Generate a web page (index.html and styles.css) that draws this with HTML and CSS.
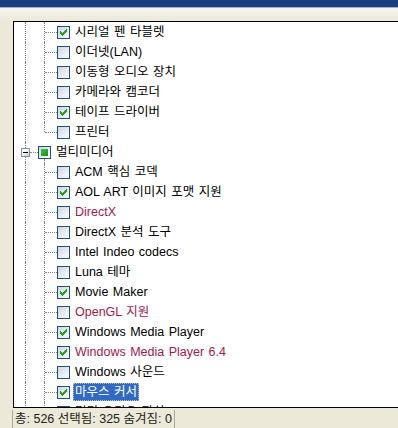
FILE: index.html
```html
<!DOCTYPE html>
<html lang="ko">
<head>
<meta charset="utf-8">
<link rel="stylesheet" href="styles.css">
</head>
<body>
<div class="edge"></div>
<div class="bar"></div>
<div class="tree">
  <div class="row"><span class="g v"></span><span class="g t"></span><span class="cb"><svg class="tick" width="7" height="7" viewBox="0 0 7 7"><path d="M6 0h1v1h-1zM5 1h2v1h-2zM0 2h1v1h-1zM4 2h3v1h-3zM0 3h2v1h-2zM3 3h3v1h-3zM0 4h5v1h-5zM1 5h3v1h-3zM2 6h1v1h-1z"/></svg></span><span class="lbl">시리얼 펜 타블렛</span></div>
  <div class="row"><span class="g v"></span><span class="g t"></span><span class="cb"></span><span class="lbl">이더넷(LAN)</span></div>
  <div class="row"><span class="g v"></span><span class="g t"></span><span class="cb"></span><span class="lbl">이동형 오디오 장치</span></div>
  <div class="row"><span class="g v"></span><span class="g t"></span><span class="cb"></span><span class="lbl">카메라와 캠코더</span></div>
  <div class="row"><span class="g v"></span><span class="g t"></span><span class="cb"><svg class="tick" width="7" height="7" viewBox="0 0 7 7"><path d="M6 0h1v1h-1zM5 1h2v1h-2zM0 2h1v1h-1zM4 2h3v1h-3zM0 3h2v1h-2zM3 3h3v1h-3zM0 4h5v1h-5zM1 5h3v1h-3zM2 6h1v1h-1z"/></svg></span><span class="lbl">테이프 드라이버</span></div>
  <div class="row"><span class="g v"></span><span class="g l"></span><span class="cb"></span><span class="lbl">프린터</span></div>
  <div class="row"><span class="g x"><span class="box"></span></span><span class="cb mix open"></span><span class="lbl">멀티미디어</span></div>
  <div class="row"><span class="g v"></span><span class="g t"></span><span class="cb"></span><span class="lbl">ACM 핵심 코덱</span></div>
  <div class="row"><span class="g v"></span><span class="g t"></span><span class="cb"><svg class="tick" width="7" height="7" viewBox="0 0 7 7"><path d="M6 0h1v1h-1zM5 1h2v1h-2zM0 2h1v1h-1zM4 2h3v1h-3zM0 3h2v1h-2zM3 3h3v1h-3zM0 4h5v1h-5zM1 5h3v1h-3zM2 6h1v1h-1z"/></svg></span><span class="lbl">AOL ART 이미지 포맷 지원</span></div>
  <div class="row"><span class="g v"></span><span class="g t"></span><span class="cb"></span><span class="lbl red">DirectX</span></div>
  <div class="row"><span class="g v"></span><span class="g t"></span><span class="cb"></span><span class="lbl">DirectX 분석 도구</span></div>
  <div class="row"><span class="g v"></span><span class="g t"></span><span class="cb"></span><span class="lbl">Intel Indeo codecs</span></div>
  <div class="row"><span class="g v"></span><span class="g t"></span><span class="cb"></span><span class="lbl">Luna 테마</span></div>
  <div class="row"><span class="g v"></span><span class="g t"></span><span class="cb"><svg class="tick" width="7" height="7" viewBox="0 0 7 7"><path d="M6 0h1v1h-1zM5 1h2v1h-2zM0 2h1v1h-1zM4 2h3v1h-3zM0 3h2v1h-2zM3 3h3v1h-3zM0 4h5v1h-5zM1 5h3v1h-3zM2 6h1v1h-1z"/></svg></span><span class="lbl">Movie Maker</span></div>
  <div class="row"><span class="g v"></span><span class="g t"></span><span class="cb"></span><span class="lbl red">OpenGL 지원</span></div>
  <div class="row"><span class="g v"></span><span class="g t"></span><span class="cb"><svg class="tick" width="7" height="7" viewBox="0 0 7 7"><path d="M6 0h1v1h-1zM5 1h2v1h-2zM0 2h1v1h-1zM4 2h3v1h-3zM0 3h2v1h-2zM3 3h3v1h-3zM0 4h5v1h-5zM1 5h3v1h-3zM2 6h1v1h-1z"/></svg></span><span class="lbl">Windows Media Player</span></div>
  <div class="row"><span class="g v"></span><span class="g t"></span><span class="cb"><svg class="tick" width="7" height="7" viewBox="0 0 7 7"><path d="M6 0h1v1h-1zM5 1h2v1h-2zM0 2h1v1h-1zM4 2h3v1h-3zM0 3h2v1h-2zM3 3h3v1h-3zM0 4h5v1h-5zM1 5h3v1h-3zM2 6h1v1h-1z"/></svg></span><span class="lbl red">Windows Media Player 6.4</span></div>
  <div class="row"><span class="g v"></span><span class="g t"></span><span class="cb"></span><span class="lbl">Windows 사운드</span></div>
  <div class="row"><span class="g v"></span><span class="g t"></span><span class="cb"><svg class="tick" width="7" height="7" viewBox="0 0 7 7"><path d="M6 0h1v1h-1zM5 1h2v1h-2zM0 2h1v1h-1zM4 2h3v1h-3zM0 3h2v1h-2zM3 3h3v1h-3zM0 4h5v1h-5zM1 5h3v1h-3zM2 6h1v1h-1z"/></svg></span><span class="lbl sel">마우스 커서</span></div>
  <div class="row"><span class="g v"></span><span class="g t"></span><span class="cb"></span><span class="lbl">멀티 오디오 장치</span></div>
</div>
<div class="status"><span class="panel">총: 526 선택됨: 325 숨겨짐: 0</span></div>
</body>
</html>
```
FILE: styles.css
```css
* { box-sizing: border-box; }
html, body { margin: 0; padding: 0; }
body {
  width: 398px;
  height: 428px;
  overflow: hidden;
  background: #ece9d8;
  font-family: "Liberation Sans", "Noto Sans CJK KR", sans-serif;
  font-size: 12.5px;
}
.edge {
  height: 8px;
  background: #1d3f7d;
  border-bottom: 1px solid #9fb0cc;
}
.bar {
  height: 13px;
  background: linear-gradient(#f7f5ee, #efece0 60%, #ece9d8);
}
.tree {
  margin-left: 13px;
  width: 400px;
  height: 387px;
  border: 1px solid #000;
  border-right: 0;
  background: #fff;
  overflow: hidden;
  padding-left: 3px;
}
.row {
  display: flex;
  align-items: center;
  height: 20px;
  white-space: nowrap;
}
.g {
  position: relative;
  flex: none;
  width: 19px;
  height: 20px;
}
.g::before {
  content: "";
  position: absolute;
  left: 8px;
  top: 0;
  bottom: 0;
  border-left: 1px dotted #808080;
}
.g.l::before { bottom: 10px; }
.g.t::after, .g.l::after, .g.x::after {
  content: "";
  position: absolute;
  left: 9px;
  right: -2px;
  top: 10px;
  border-top: 1px dotted #808080;
}
.g.x::after { left: 13px; }
.box {
  position: absolute;
  z-index: 1;
  left: 4px;
  top: 6px;
  width: 9px;
  height: 9px;
  border: 1px solid #7b98b2;
  background: linear-gradient(135deg, #ffffff 35%, #c9c6b8);
}
.box::after {
  content: "";
  position: absolute;
  left: 1px;
  top: 3px;
  width: 5px;
  height: 1px;
  background: #000;
}
.cb {
  position: relative;
  flex: none;
  width: 13px;
  height: 13px;
  margin-left: 2px;
  border: 1px solid #1c5180;
  background: linear-gradient(135deg, #cdd5e2 0%, #e6eaf1 50%, #ffffff 100%);
}
.tick {
  position: absolute;
  left: 2px;
  top: 2px;
  fill: #21a121;
  shape-rendering: crispEdges;
}
.cb.mix::before {
  content: "";
  position: absolute;
  left: 2px;
  top: 2px;
  width: 7px;
  height: 7px;
  background: linear-gradient(135deg, #3fc33f, #1a8f1a);
}
.cb.open::after {
  content: "";
  position: absolute;
  left: 5px;
  top: 12px;
  height: 6px;
  border-left: 1px dotted #808080;
}
.lbl {
  margin-left: 3px;
  padding: 1px 2px;
  line-height: 16px;
  color: #000;
  word-spacing: 1px;
}
.lbl.red { color: #a3194b; }
.lbl.sel {
  background: #316ac5;
  color: #fff;
  outline: 1px dotted #c9c28a;
  outline-offset: -1px;
}
.status {
  height: 20px;
  padding: 2px 0 0 12px;
}
.panel {
  display: inline-block;
  height: 18px;
  border-left: 1px solid #aca899;
  border-right: 1px solid #aca899;
  padding: 0 2px 0 2px;
  line-height: 18px;
  color: #222;
  font-size: 12.5px;
  white-space: nowrap;
}
```
